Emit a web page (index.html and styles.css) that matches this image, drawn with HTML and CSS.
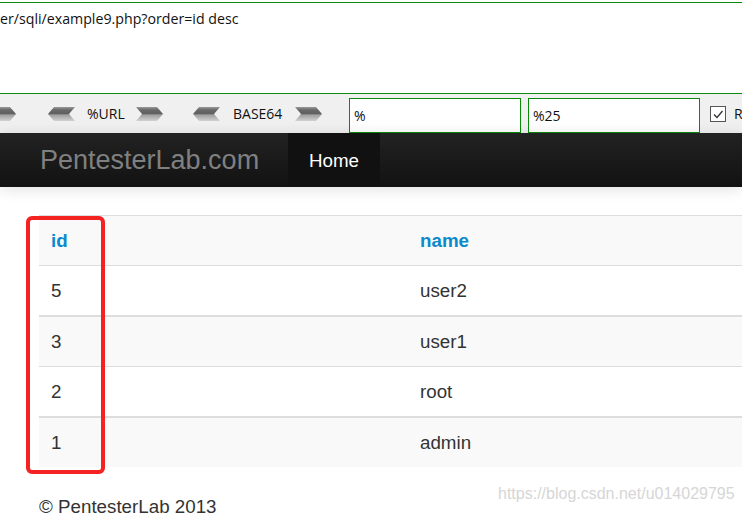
FILE: index.html
```html
<!DOCTYPE html>
<html>
<head>
<meta charset="utf-8">
<link rel="stylesheet" href="styles.css">
</head>
<body>
<div class="urlbox">er/sqli/example9.php?order=id desc</div>
<div class="toolbar">
  <svg class="arrow first" width="27" height="14" viewBox="0 0 27 14">
    <defs>
      <linearGradient id="ag" x1="0" y1="0" x2="0" y2="1">
        <stop offset="0" stop-color="#9a9a9a"/>
        <stop offset="0.2" stop-color="#6a6a6a"/>
        <stop offset="0.5" stop-color="#5e5e5e"/>
        <stop offset="0.55" stop-color="#9c9c9c"/>
        <stop offset="1" stop-color="#d2d2d2"/>
      </linearGradient>
    </defs>
    <polygon points="0,0 21,0 27,7 21,14 0,14 6,7" fill="url(#ag)"/>
  </svg>
  <svg class="arrow al1" width="27" height="14" viewBox="0 0 27 14"><polygon points="6,0 27,0 21,7 27,14 6,14 0,7" fill="url(#ag)"/></svg>
  <span class="label l-url">%URL</span>
  <svg class="arrow ar1" width="27" height="14" viewBox="0 0 27 14"><polygon points="0,0 21,0 27,7 21,14 0,14 6,7" fill="url(#ag)"/></svg>
  <svg class="arrow al2" width="27" height="14" viewBox="0 0 27 14"><polygon points="6,0 27,0 21,7 27,14 6,14 0,7" fill="url(#ag)"/></svg>
  <span class="label l-b64">BASE64</span>
  <svg class="arrow ar2" width="27" height="14" viewBox="0 0 27 14"><polygon points="0,0 21,0 27,7 21,14 0,14 6,7" fill="url(#ag)"/></svg>
  <div class="field f1">%</div>
  <div class="field f2">%25</div>
  <div class="check"><svg width="14" height="14" viewBox="0 0 14 14"><polyline points="3,7.5 6,10.5 11.5,4" fill="none" stroke="#333" stroke-width="1.3"/></svg></div>
  <span class="label l-r">R</span>
</div>
<div class="navbar">
  <div class="brand">PentesterLab.com</div>
  <div class="navitem active">Home</div>
</div>
<div class="container">
  <table class="table">
    <thead>
      <tr><th>id</th><th>name</th></tr>
    </thead>
    <tbody>
      <tr><td>5</td><td>user2</td></tr>
      <tr class="striped"><td>3</td><td>user1</td></tr>
      <tr><td>2</td><td>root</td></tr>
      <tr class="striped"><td>1</td><td>admin</td></tr>
    </tbody>
  </table>
  <footer class="footer">© PentesterLab 2013</footer>
</div>
<div class="highlight"></div>
<div class="watermark">https://blog.csdn.net/u014029795</div>
</body>
</html>
```
FILE: styles.css
```css
html, body {
  margin: 0;
  padding: 0;
  width: 742px;
  height: 513px;
  overflow: hidden;
  background: #fff;
}
body {
  position: relative;
  font-family: "Liberation Sans", Arial, sans-serif;
  color: #333;
}
.urlbox {
  margin-top: 2px;
  box-sizing: border-box;
  height: 92px;
  border-top: 1px solid #0a8a0a;
  border-bottom: 1px solid #0a8a0a;
  font-family: "Open Sans", "Noto Sans", sans-serif;
  font-size: 14.2px;
  line-height: 18px;
  color: #111;
  padding-top: 7px;
}
.toolbar {
  height: 39px;
  background: #f0f0f0;
  display: flex;
  align-items: center;
  font-family: "Open Sans", "Noto Sans", sans-serif;
  font-size: 14px;
  color: #111;
  white-space: nowrap;
}
.arrow { flex: none; display: block; }
.first { margin-left: -11px; }
.al1 { margin-left: 32px; }
.label { flex: none; }
.l-url { margin-left: 12px; width: 39px; }
.ar1 { margin-left: 10px; }
.al2 { margin-left: 30px; }
.l-b64 { margin-left: 13px; width: 51px; }
.ar2 { margin-left: 11px; }
.field {
  flex: none;
  box-sizing: border-box;
  width: 172px;
  height: 35px;
  border: 1px solid #0a8a0a;
  background: #fff;
  padding-left: 4px;
  line-height: 33px;
  margin-top: 3px;
}
.f1 { margin-left: 27px; }
.f2 { margin-left: 7px; }
.check {
  flex: none;
  box-sizing: border-box;
  width: 16px;
  height: 16px;
  border: 1px solid #555;
  background: #fff;
  margin-left: 10px;
  display: flex;
  align-items: center;
  justify-content: center;
}
.l-r { margin-left: 8px; }
.navbar {
  height: 54px;
  background: linear-gradient(#222222, #121212);
  display: flex;
  align-items: stretch;
  box-shadow: 0 2px 14px rgba(0,0,0,0.13);
  position: relative;
}
.brand {
  padding-left: 40px;
  font-size: 27px;
  color: #808080;
  display: flex;
  align-items: center;
  width: 220px;
  white-space: nowrap;
}
.navitem {
  margin-left: 28px;
  width: 92px;
  padding-left: 21px;
  box-sizing: border-box;
  font-size: 18.75px;
  color: #fff;
  display: flex;
  align-items: center;
  padding-top: 1px;
}
.navitem.active { background: #111; }
.container {
  padding-left: 39px;
  padding-top: 28px;
}
.table {
  width: 738px;
  border-collapse: collapse;
  font-size: 18.75px;
  line-height: 25px;
}
.table th, .table td {
  width: 50%;
  text-align: left;
  padding: 12px;
  border-top: 1px solid #dddddd;
  vertical-align: top;
}
.table th {
  color: #0a8acc;
  font-weight: bold;
  background: #f9f9f9;
}
.table tr.striped td {
  background: #f9f9f9;
  border-top: 2px solid #dddddd;
  padding-top: 12px;
}
.footer {
  margin-top: 27px;
  font-size: 18.75px;
  line-height: 25px;
  color: #333;
}
.highlight {
  position: absolute;
  left: 26px;
  top: 216px;
  width: 79px;
  height: 258px;
  box-sizing: border-box;
  border: 4px solid #f52222;
  border-radius: 6px;
}
.watermark {
  position: absolute;
  left: 498px;
  top: 484px;
  font-size: 16px;
  line-height: 20px;
  color: #d6d6d6;
  white-space: nowrap;
}
```
